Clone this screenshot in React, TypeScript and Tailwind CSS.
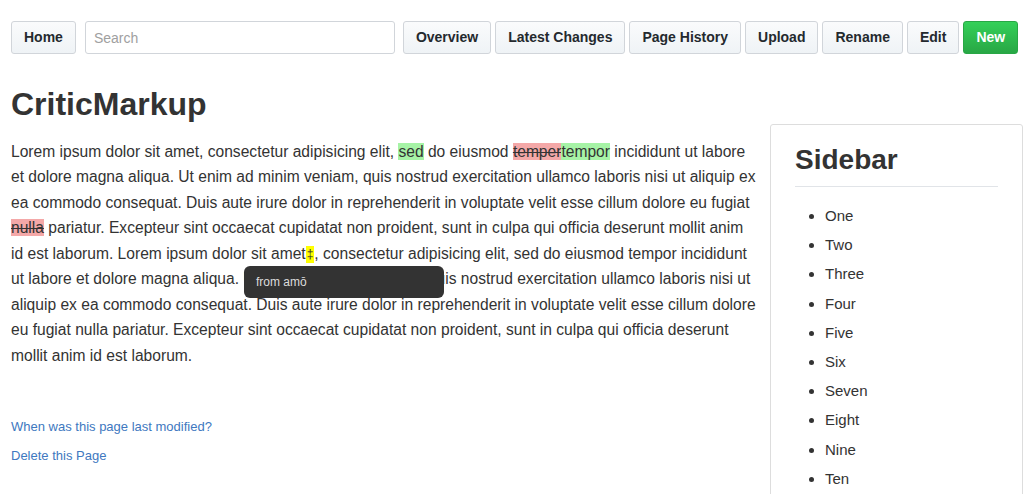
import React from 'react';

// ============================================================================
// WIKI PAGE — CriticMarkup demo
// ============================================================================

const navButtons = ['Overview', 'Latest Changes', 'Page History', 'Upload', 'Rename', 'Edit'];
const sidebarItems = ['One', 'Two', 'Three', 'Four', 'Five', 'Six', 'Seven', 'Eight', 'Nine', 'Ten'];

const btn =
  'h-[33px] px-[12px] rounded-[3px] border border-[#d1d5da] bg-gradient-to-b from-[#fafbfc] to-[#eff3f6] text-[14px] font-bold text-[#24292e] flex items-center';

const Ins: React.FC<{ children: React.ReactNode }> = ({ children }) => (
  <span className="bg-[#a6f3a6]">{children}</span>
);

const Del: React.FC<{ children: React.ReactNode }> = ({ children }) => (
  <span className="bg-[#f4a8a8] line-through">{children}</span>
);

export default function App() {
  return (
    <div className="w-[1032px] h-[494px] overflow-hidden bg-white text-[#333] font-['Liberation_Sans',Arial,sans-serif]">
      {/* Top navigation */}
      <div className="flex items-center px-[11px] pt-[21px]">
        <button className={btn}>Home</button>
        <input
          placeholder="Search"
          className="ml-[9px] h-[33px] w-[310px] rounded-[3px] border border-[#d1d5da] px-[8px] text-[14px] placeholder:text-[#a0a0a0] outline-none"
        />
        <div className="ml-[8px] flex gap-[4px]">
          {navButtons.map((b) => (
            <button key={b} className={btn}>
              {b}
            </button>
          ))}
          <button className="h-[33px] px-[12px] rounded-[3px] border border-[#28a745] bg-gradient-to-b from-[#34d058] to-[#28a745] text-[14px] font-bold text-white flex items-center">
            New
          </button>
        </div>
      </div>

      {/* Title */}
      <h1 className="px-[11px] mt-[30px] text-[32px] font-bold leading-[40px] text-[#333]">CriticMarkup</h1>

      <div className="flex px-[11px] gap-[19px] mt-[4px]">
        {/* Main content */}
        <div className="w-[740px] shrink-0">
          <div className="relative">
            <p className="text-[15.6px] leading-[25.45px] pt-[11px] mr-[-7px]">
              Lorem ipsum dolor sit amet, consectetur adipisicing elit, <Ins>sed</Ins> do eiusmod{' '}
              <Del>temper</Del>
              <Ins>tempor</Ins> incididunt ut labore et dolore magna aliqua. Ut enim ad minim veniam, quis nostrud
              exercitation ullamco laboris nisi ut aliquip ex ea commodo consequat. Duis aute irure dolor in
              reprehenderit in voluptate velit esse cillum dolore eu fugiat <Del>nulla</Del> pariatur. Excepteur sint
              occaecat cupidatat non proident, sunt in culpa qui officia deserunt mollit anim id est laborum. Lorem
              ipsum dolor sit amet
              <span className="inline-block align-[1px] bg-[#ffff00] text-[12px] leading-[17px] h-[17px] px-[1px] pb-[4px]">
                ‡
              </span>
              , consectetur adipisicing elit, sed do eiusmod tempor incididunt ut labore et dolore magna aliqua. Ut
              enim ad minim veniam, quis nostrud exercitation ullamco laboris nisi ut aliquip ex ea commodo
              consequat. Duis aute irure dolor in reprehenderit in voluptate velit esse cillum dolore eu fugiat nulla
              pariatur. Excepteur sint occaecat cupidatat non proident, sunt in culpa qui officia deserunt mollit anim
              id est laborum.
            </p>

            {/* Tooltip */}
            <div className="absolute left-[233px] top-[138px] w-[200px] h-[32px] rounded-[6px] bg-[#333] px-[12px] flex items-center text-[12px] text-[#ddd]">
              from amō
            </div>
          </div>

          <div className="mt-[49px] flex flex-col gap-[9px] text-[13px] text-[#4078c0]">
            <a href="#">When was this page last modified?</a>
            <a href="#">Delete this Page</a>
          </div>
        </div>

        {/* Sidebar */}
        <div className="w-[253px] shrink-0 h-[400px] -mt-[4px] rounded-[3px] border border-[#ddd] px-[24px] pt-[15px]">
          <h2 className="text-[28px] font-bold leading-[40px] pb-[6px] border-b border-[#e1e4e8]">Sidebar</h2>
          <ul className="list-disc pl-[30px] pt-[14px] text-[15px] leading-[29.2px]">
            {sidebarItems.map((i) => (
              <li key={i}>{i}</li>
            ))}
          </ul>
        </div>
      </div>
    </div>
  );
}
